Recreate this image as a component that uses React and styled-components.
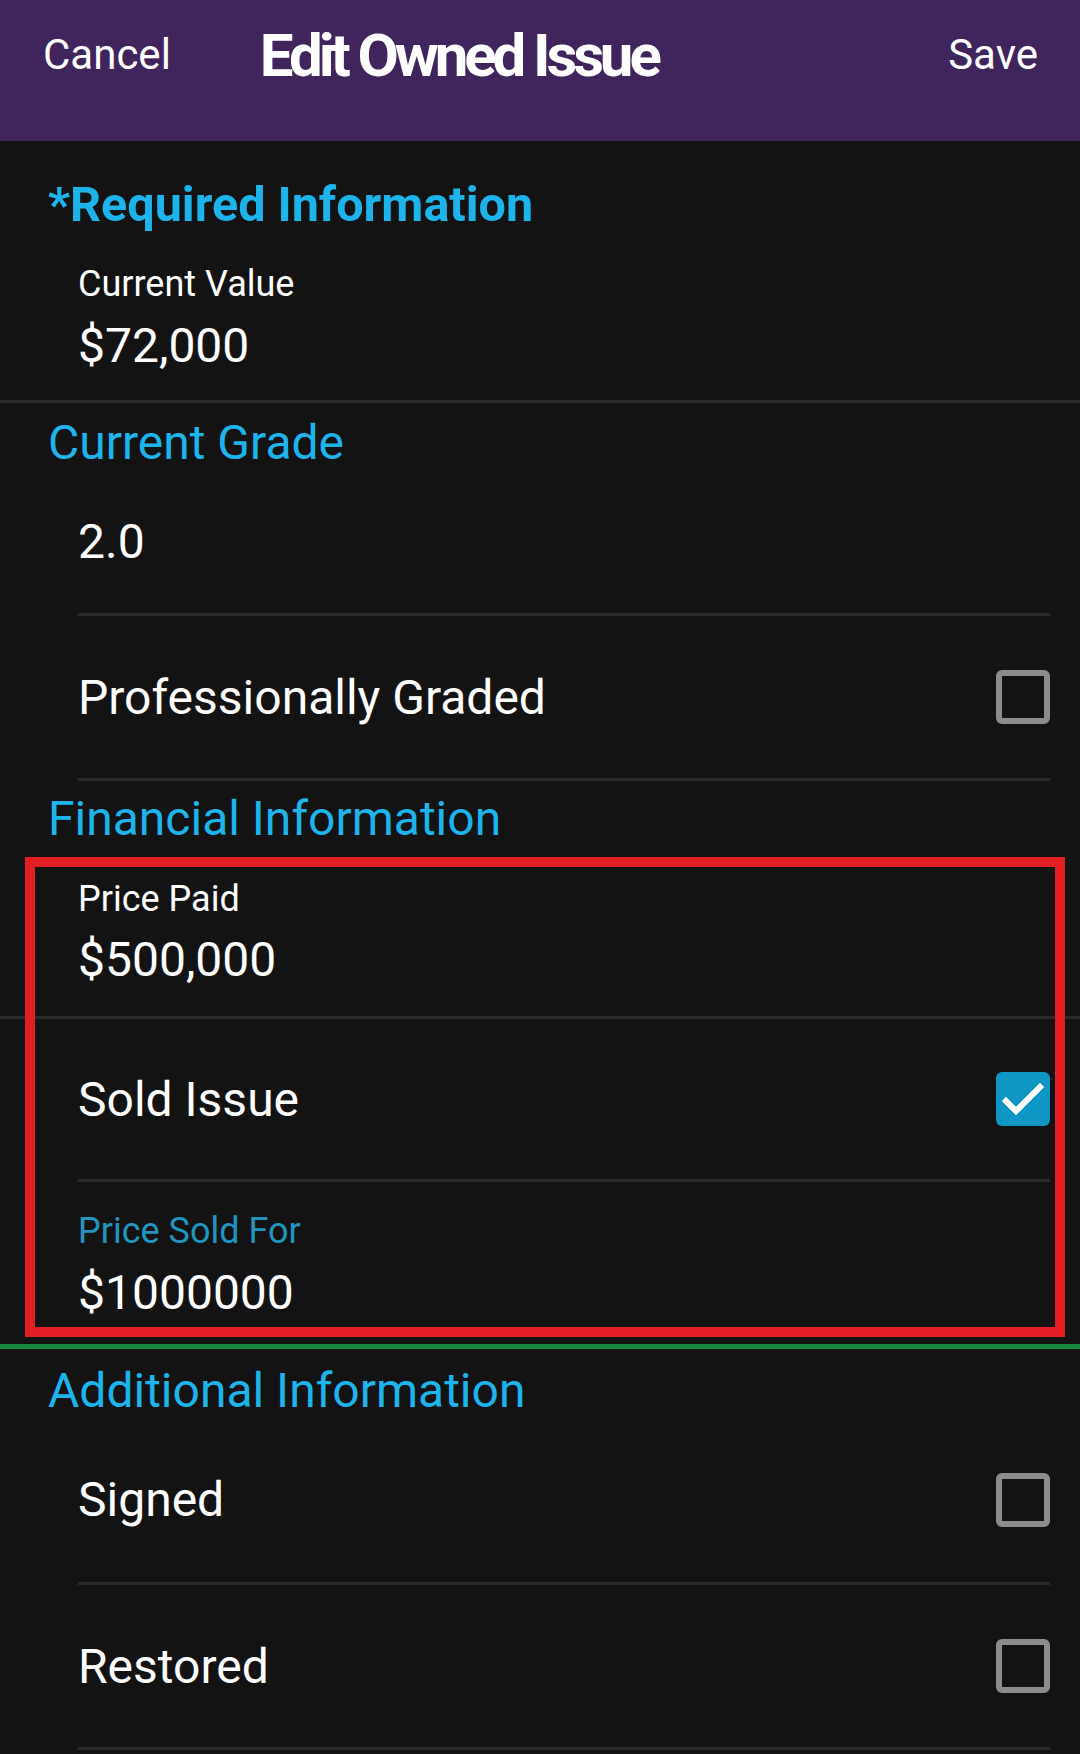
import React from "react";
import styled, { createGlobalStyle } from "styled-components";

const GlobalStyle = createGlobalStyle`
  html, body { margin: 0; padding: 0; background: #131313; }
  body { font-family: Roboto, "Noto Sans", Arial, sans-serif; }
  * { box-sizing: border-box; }
`;

const Screen = styled.div`
  width: 1080px;
  min-height: 1754px;
  background: #131313;
  color: #ffffff;
  font-family: Roboto, "Noto Sans", Arial, sans-serif;
`;

const Header = styled.header`
  height: 141px;
  background: #40245c;
  display: flex;
  align-items: center;
  padding: 0 42px 31px 43px;
`;

const NavButton = styled.span`
  font-size: 42px;
  line-height: 1;
  color: #ffffff;
  font-weight: 400;
`;

const Title = styled.h1`
  flex: 1;
  margin: 2px 0 0 89px;
  font-size: 60px;
  line-height: 1;
  font-weight: 700;
  letter-spacing: -4.1px;
  color: #ffffff;
`;

const SectionTitle = styled.h2`
  margin: 0;
  padding: ${(p) => p.$top}px 48px 0;
  font-size: ${(p) => (p.$bold ? 48.5 : 48)}px;
  font-weight: ${(p) => (p.$bold ? 700 : 400)};
  line-height: ${(p) => (p.$bold ? 56 : 52)}px;
  color: #1db4ec;
`;

const Field = styled.div`
  display: flex;
  flex-direction: column;
  padding: ${(p) => p.$top}px 78px ${(p) => p.$bottom}px;
`;

const FieldLabel = styled.div`
  font-size: 36px;
  line-height: 40px;
  color: ${(p) => (p.$accent ? "#2195bf" : "#ffffff")};
`;

const FieldValue = styled.div`
  margin-top: ${(p) => p.$gap}px;
  font-size: 48px;
  line-height: 52px;
  color: #ffffff;
`;

const Row = styled.div`
  height: ${(p) => p.$h}px;
  display: flex;
  align-items: center;
  justify-content: space-between;
  padding: 0 30px 0 78px;
  font-size: 48px;
  color: #ffffff;
`;

const Divider = styled.div`
  height: ${(p) => (p.$green ? 5 : 3)}px;
  background: ${(p) => (p.$green ? "#14893f" : "#2a2a2a")};
  margin: 0 ${(p) => (p.$inset ? 30 : 0)}px 0 ${(p) => (p.$inset ? 78 : 0)}px;
`;

const Box = styled.span`
  width: 54px;
  height: 54px;
  border-radius: 6px;
  display: flex;
  align-items: center;
  justify-content: center;
  border: ${(p) => (p.$checked ? "none" : "6px solid #8c8c8c")};
  background: ${(p) => (p.$checked ? "#0e97c4" : "transparent")};
`;

const Highlighted = styled.div`
  position: relative;
`;

const Highlight = styled.div`
  position: absolute;
  top: 12px;
  left: 25px;
  right: 15px;
  bottom: 7px;
  border: 10px solid #e31e25;
  pointer-events: none;
`;

const Checkbox = ({ checked }) => (
  <Box $checked={checked}>
    {checked && (
      <svg width="54" height="54" viewBox="0 0 54 54">
        <polyline
          points="10,29 20,39 44,15"
          fill="none"
          stroke="#ffffff"
          strokeWidth="6"
          strokeLinecap="square"
        />
      </svg>
    )}
  </Box>
);

export default function App() {
  return (
    <Screen>
      <GlobalStyle />
      <Header>
        <NavButton>Cancel</NavButton>
        <Title>Edit Owned Issue</Title>
        <NavButton>Save</NavButton>
      </Header>

      <SectionTitle $bold $top={36}>*Required Information</SectionTitle>
      <Field $top={31} $bottom={28}>
        <FieldLabel>Current Value</FieldLabel>
        <FieldValue $gap={16}>$72,000</FieldValue>
      </Field>
      <Divider />

      <SectionTitle $top={14}>Current Grade</SectionTitle>
      <Row $h={144}>2.0</Row>
      <Divider $inset />
      <Row $h={162}>
        Professionally Graded
        <Checkbox />
      </Row>
      <Divider $inset />

      <SectionTitle $top={12}>Financial Information</SectionTitle>
      <Highlighted>
        <Field $top={34} $bottom={30}>
          <FieldLabel>Price Paid</FieldLabel>
          <FieldValue $gap={15}>$500,000</FieldValue>
        </Field>
        <Divider />
        <Row $h={160}>
          Sold Issue
          <Checkbox checked />
        </Row>
        <Divider $inset />
        <Field $top={29} $bottom={25}>
          <FieldLabel $accent>Price Sold For</FieldLabel>
          <FieldValue $gap={16}>$1000000</FieldValue>
        </Field>
        <Highlight />
      </Highlighted>
      <Divider $green />

      <SectionTitle $top={16}>Additional Information</SectionTitle>
      <Row $h={165}>
        Signed
        <Checkbox />
      </Row>
      <Divider $inset />
      <Row $h={162}>
        Restored
        <Checkbox />
      </Row>
      <Divider $inset />
    </Screen>
  );
}
